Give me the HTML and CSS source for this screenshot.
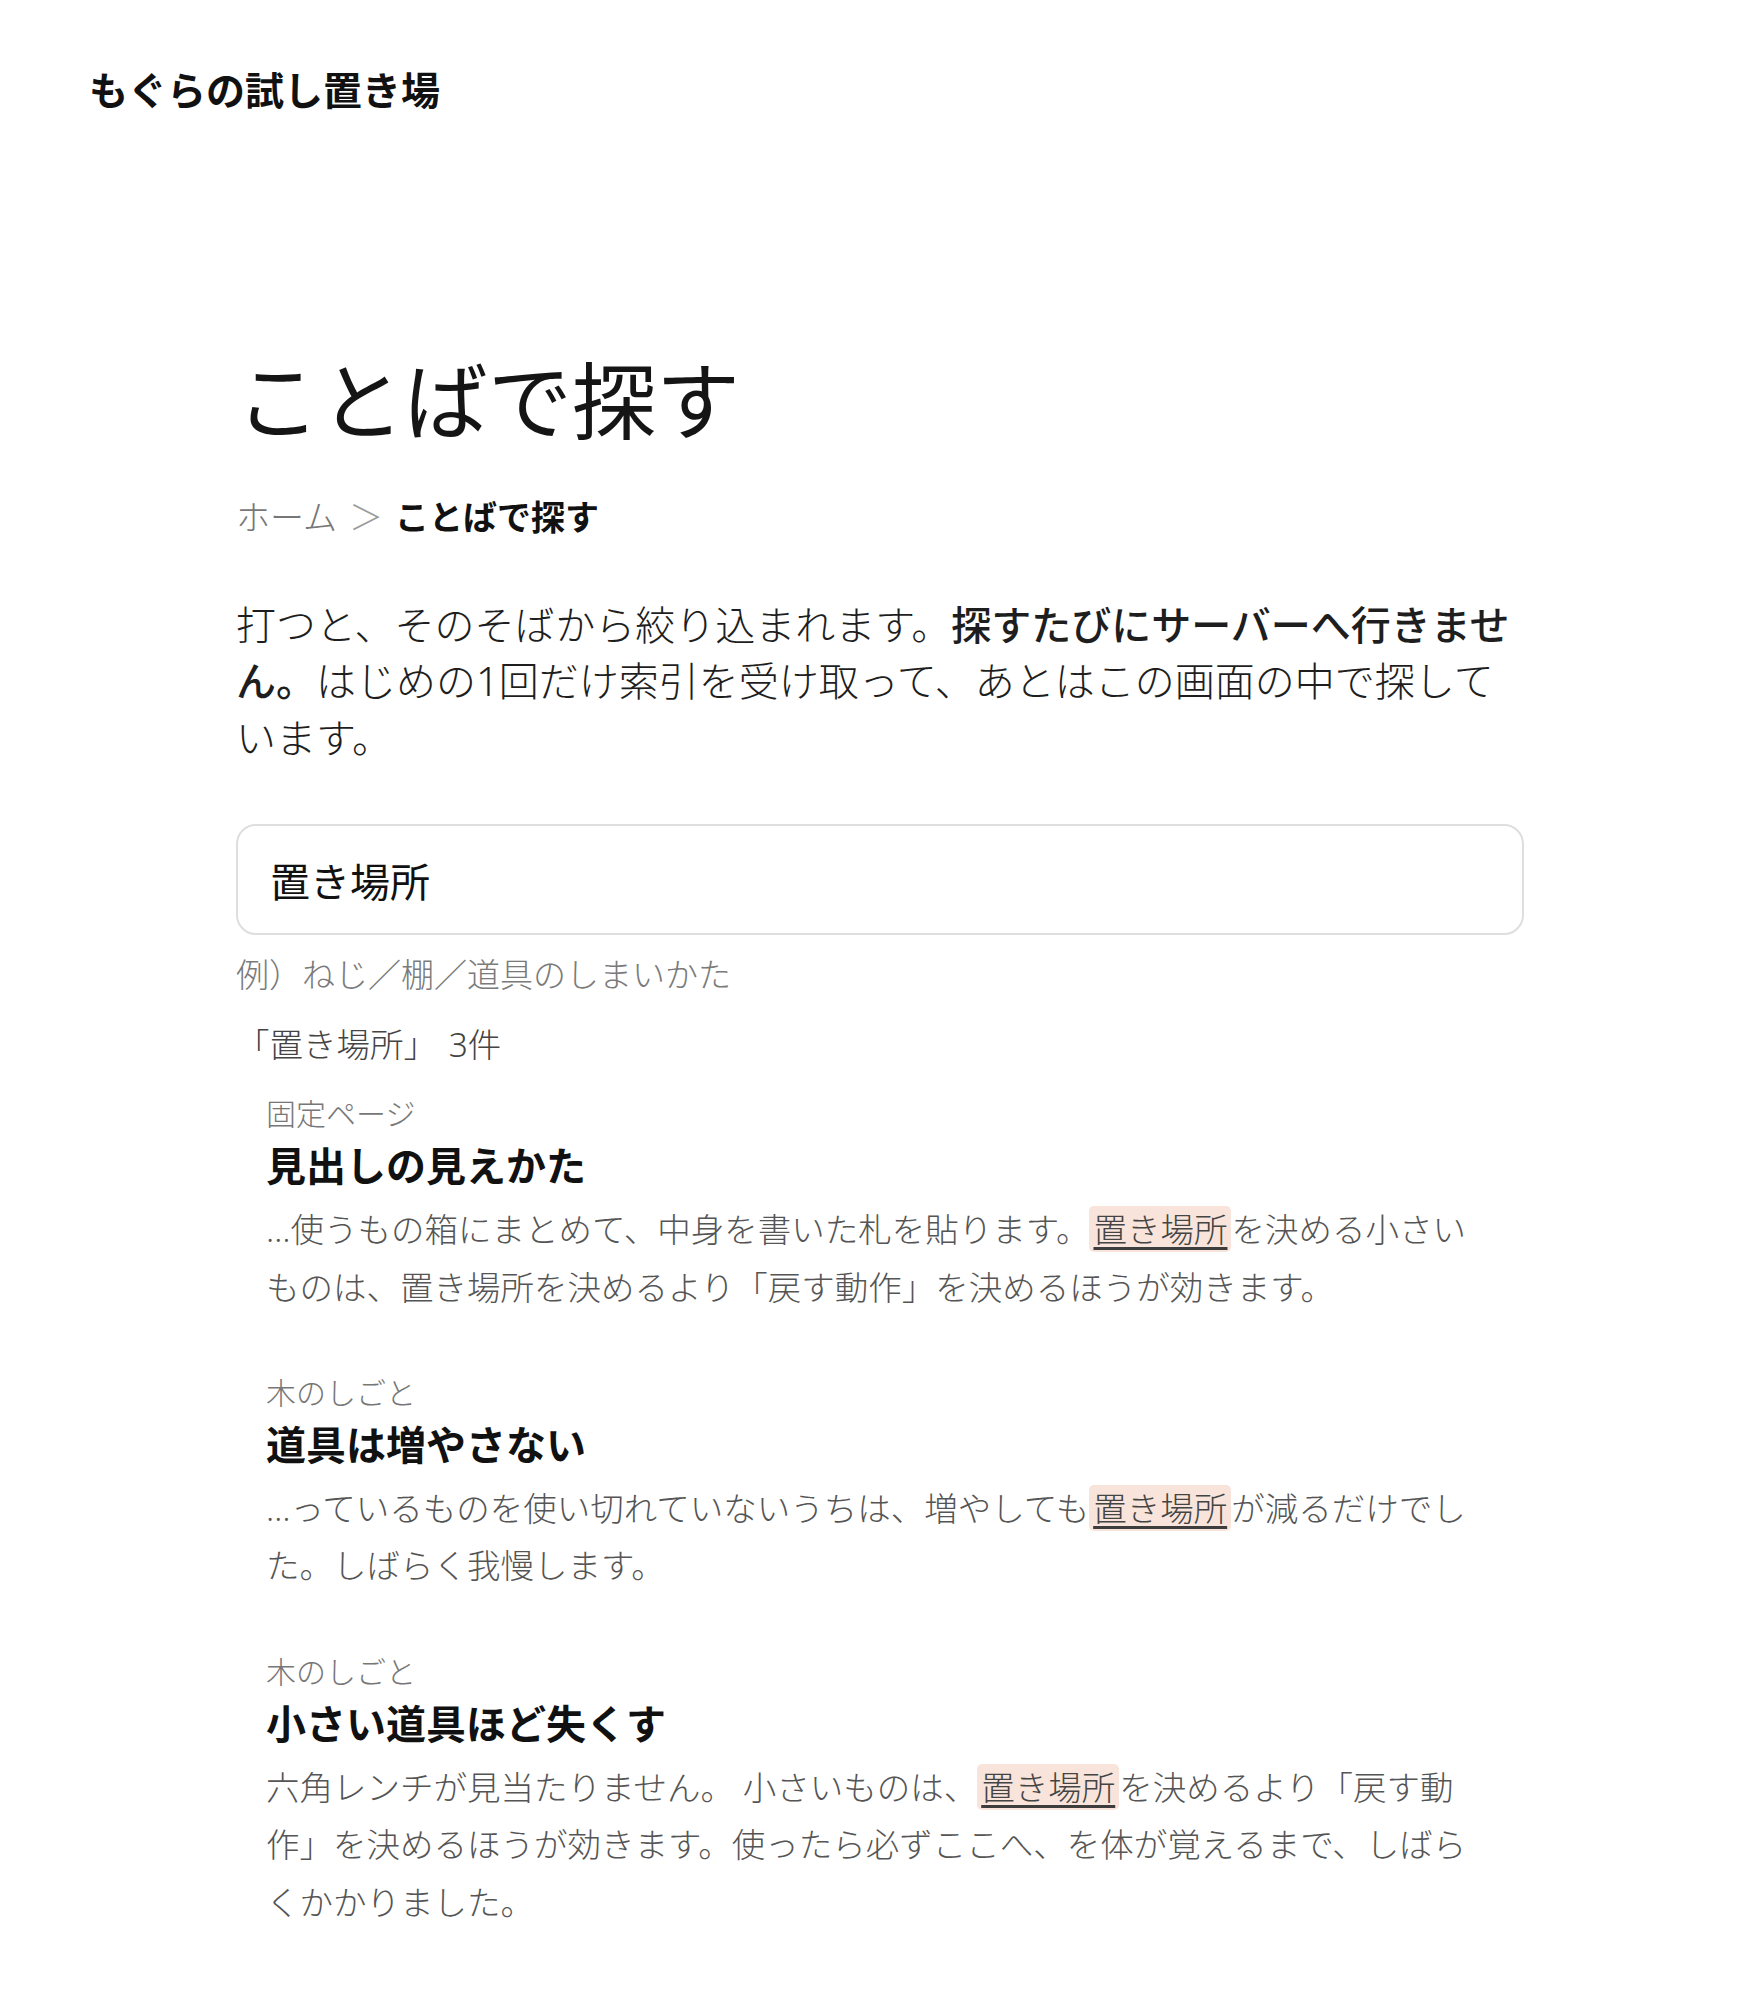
FILE: index.html
```html
<!DOCTYPE html>
<html lang="ja">
<head>
<meta charset="utf-8">
<title>ことばで探す | もぐらの試し置き場</title>
<link rel="stylesheet" href="styles.css">
</head>
<body>
<header class="site-header">
  <a class="site-title" href="#">もぐらの試し置き場</a>
</header>
<main class="main">
  <h1 class="page-title">ことばで探す</h1>
  <nav class="breadcrumb">
    <a class="crumb-link" href="#">ホーム</a><span class="crumb-sep">＞</span><span class="crumb-current">ことばで探す</span>
  </nav>
  <p class="lead">打つと、そのそばから絞り込まれます。<strong class="lead-strong">探すたびにサーバーへ行きません。</strong>はじめの1回だけ索引を受け取って、あとはこの画面の中で探しています。</p>
  <div class="search">
    <input class="search-input" type="text" value="置き場所" aria-label="ことばで探す">
  </div>
  <p class="search-hint">例）ねじ／棚／道具のしまいかた</p>
  <p class="result-count">「置き場所」 3件</p>
  <ul class="results">
    <li class="result">
      <div class="result-cat">固定ページ</div>
      <a class="result-title" href="#">見出しの見えかた</a>
      <p class="result-snippet">…使うもの箱にまとめて、中身を書いた札を貼ります。<mark class="hit">置き場所</mark>を決める小さいものは、置き場所を決めるより「戻す動作」を決めるほうが効きます。</p>
    </li>
    <li class="result">
      <div class="result-cat">木のしごと</div>
      <a class="result-title" href="#">道具は増やさない</a>
      <p class="result-snippet">…っているものを使い切れていないうちは、増やしても<mark class="hit">置き場所</mark>が減るだけでした。しばらく我慢します。</p>
    </li>
    <li class="result">
      <div class="result-cat">木のしごと</div>
      <a class="result-title" href="#">小さい道具ほど失くす</a>
      <p class="result-snippet">六角レンチが見当たりません。 小さいものは、<mark class="hit">置き場所</mark>を決めるより「戻す動作」を決めるほうが効きます。使ったら必ずここへ、を体が覚えるまで、しばらくかかりました。</p>
    </li>
  </ul>
</main>
</body>
</html>
```

FILE: styles.css
```css
* {
  box-sizing: border-box;
}

html,
body {
  margin: 0;
  padding: 0;
  background: #ffffff;
}

body {
  font-family: "Noto Sans", "Noto Sans CJK JP", sans-serif;
  font-weight: 300;
  color: #1a1a1a;
  text-spacing-trim: space-all;
}

a {
  color: inherit;
  text-decoration: none;
}

.site-header {
  padding: 61px 89px 0;
}

.site-title {
  display: block;
  font-size: 39px;
  font-weight: 700;
  line-height: 57px;
  color: #111111;
}

.main {
  width: 1288px;
  margin: 0 auto;
  padding: 233px 0 60px;
}

.page-title {
  margin: 0;
  font-size: 84px;
  font-weight: 400;
  line-height: 100px;
  color: #151515;
}

.breadcrumb {
  margin-top: 42px;
  font-size: 34px;
  line-height: 48px;
  display: flex;
  align-items: center;
}

.crumb-link {
  color: #777777;
}

.crumb-sep {
  color: #9a9a9a;
  margin: 0 12px;
}

.crumb-current {
  font-weight: 700;
  color: #111111;
}

.lead {
  margin: 56px 0 0;
  font-size: 40px;
  line-height: 56.4px;
  color: #1e1e1e;
}

.lead-strong {
  font-weight: 500;
}

.search {
  margin-top: 58px;
}

.search-input {
  display: block;
  width: 100%;
  height: 111px;
  padding: 0 32px;
  border: 2px solid #dedede;
  border-radius: 20px;
  background: #ffffff;
  font-family: inherit;
  font-size: 40px;
  font-weight: 400;
  color: #111111;
  outline: none;
}

.search-hint {
  margin: 16px 0 0;
  font-size: 33px;
  line-height: 48px;
  color: #7a7a7a;
}

.result-count {
  margin: 21px 0 0;
  font-size: 33.5px;
  line-height: 48px;
  color: #444444;
  word-spacing: 3px;
}

.results {
  list-style: none;
  margin: 24px 0 0;
  padding: 0;
  display: flex;
  flex-direction: column;
  gap: 55px;
}

.result {
  padding: 0 30px;
}

.result-cat {
  font-size: 30px;
  line-height: 44px;
  color: #777777;
}

.result-title {
  display: block;
  margin-top: 2px;
  font-size: 40px;
  font-weight: 700;
  line-height: 56px;
  color: #111111;
}

.result-snippet {
  margin: 7px 0 0;
  font-size: 33.5px;
  line-height: 57.4px;
  color: #555555;
}

.hit {
  background: #f8e4da;
  color: #444444;
  padding: 0 4px;
  border-radius: 5px;
  text-decoration: underline;
  text-decoration-color: #3d3d3d;
  text-decoration-thickness: 3px;
  text-underline-offset: 5px;
}
```
